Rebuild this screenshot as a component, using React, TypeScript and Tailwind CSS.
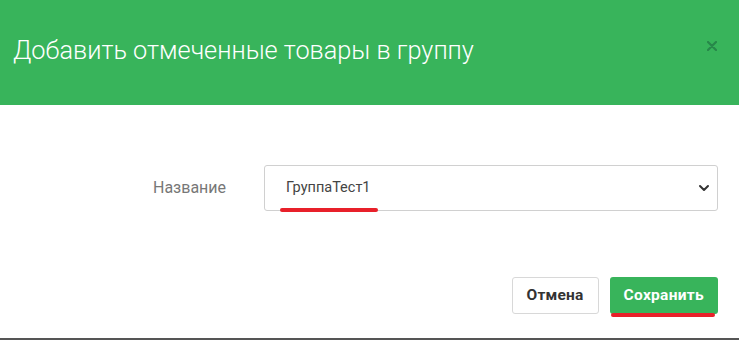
import React from 'react';

const App: React.FC = () => {
  return (
    <div className="w-[739px] h-[340px] bg-white flex flex-col overflow-hidden" style={{ fontFamily: 'Roboto, "Noto Sans", sans-serif' }}>
      {/* Header */}
      <div className="h-[105px] bg-[#38b45b] flex items-center justify-between pl-[13px] pr-[22px]">
        <h1 className="text-[25.3px] font-light text-white pb-[4px]">Добавить отмеченные товары в группу</h1>
        <svg width="10" height="10" viewBox="0 0 10 10" className="mb-[14px]">
          <path d="M1 1l8 8M9 1l-8 8" stroke="#27874a" strokeWidth="2.2" strokeLinecap="round" />
        </svg>
      </div>

      {/* Body */}
      <div className="flex-1 flex flex-col">
        <div className="flex items-center mt-[60px] pl-[153px] pr-[21px]">
          <label className="w-[111px] text-[16px] text-[#777]">Название</label>
          <div className="relative flex-1">
            <div className="h-[46px] border border-[#d0d0d0] rounded-[3px] flex items-center justify-between pl-[21px] pr-[6px] text-[14.5px] text-[#444]">
              <span>ГруппаТест1</span>
              <svg width="14" height="14" viewBox="0 0 14 14" fill="none">
                <path d="M3 5l4 4 4-4" stroke="#333" strokeWidth="2" strokeLinecap="round" strokeLinejoin="round" />
              </svg>
            </div>
            <div className="absolute left-[16px] top-[43px] w-[98px] h-[4px] rounded-full bg-[#e8202a]" />
          </div>
        </div>

        <div className="flex justify-end gap-[11px] mt-[66px] pr-[21px]">
          <button className="h-[37px] px-[14px] border border-[#d8d8d8] rounded-[3px] bg-white text-[15.5px] tracking-[0.2px] font-bold text-[#333]">Отмена</button>
          <div className="relative">
            <button className="h-[37px] px-[14px] rounded-[3px] bg-[#38b45b] text-[15.5px] tracking-[0.3px] font-bold text-white">Сохранить</button>
            <div className="absolute left-[1px] right-[3px] top-[36px] h-[4px] rounded-full bg-[#e8202a]" />
          </div>
        </div>
        <div className="flex-1" />
        <div className="h-[2px] bg-[#555]" />
      </div>
    </div>
  );
};

export default App;
